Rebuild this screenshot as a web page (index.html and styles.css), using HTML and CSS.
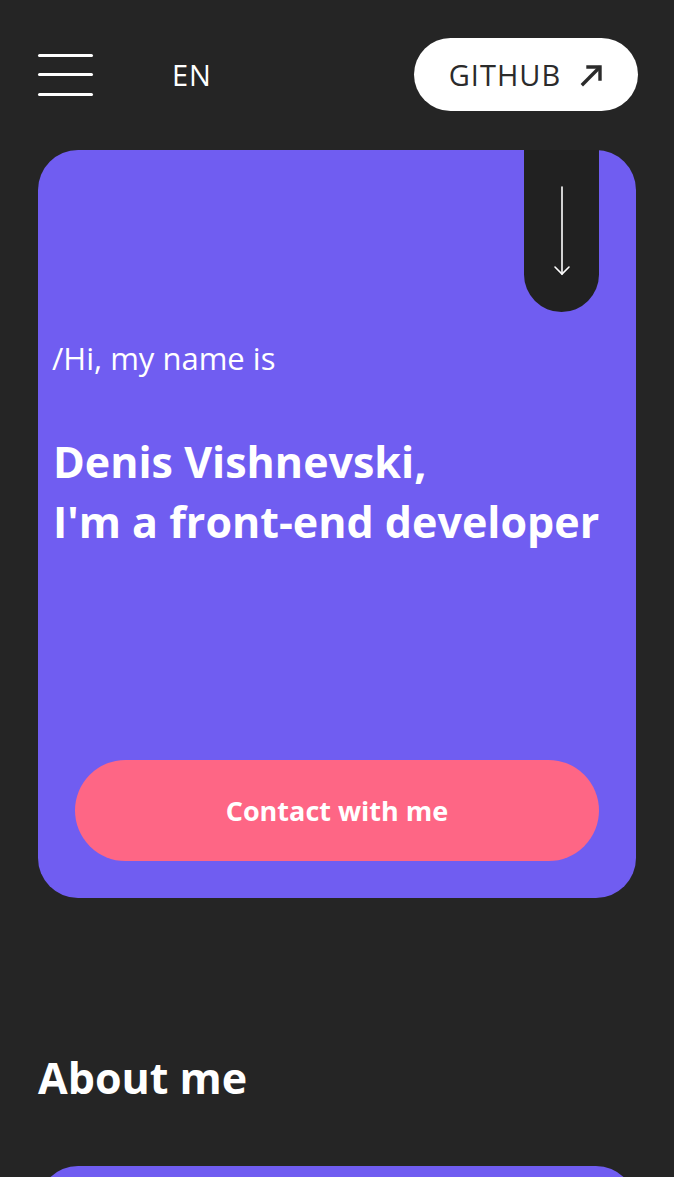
FILE: index.html
```html
<!DOCTYPE html>
<html lang="en">
<head>
<meta charset="utf-8">
<title>Denis Vishnevski</title>
<link rel="stylesheet" href="styles.css">
</head>
<body>
<div class="page">
  <header class="header">
    <button class="burger" aria-label="Menu"><span></span><span></span><span></span></button>
    <span class="lang">EN</span>
    <a class="github" href="#">GITHUB
      <svg class="github-icon" width="24" height="24" viewBox="0 0 24 24" fill="none" stroke="#2b2b2b" stroke-width="3.4" stroke-linecap="square"><path d="M4 21L20 5"/><path d="M9 4H21V16"/></svg>
    </a>
  </header>

  <section class="hero">
    <a class="scroll-tab" href="#about" aria-label="Scroll down">
      <svg width="20" height="92" viewBox="0 0 20 92" fill="none" stroke="#fff" stroke-width="1.6" stroke-linecap="round"><path d="M10 1V88"/><path d="M3 81L10 88L17 81"/></svg>
    </a>
    <p class="hi">/Hi, my name is</p>
    <h1 class="title">Denis Vishnevski,<br>I'm a front-end developer</h1>
    <a class="contact" href="#">Contact with me</a>
  </section>

  <section class="about" id="about">
    <h2 class="about-title">About me</h2>
    <div class="about-card"></div>
  </section>
</div>
</body>
</html>
```

FILE: styles.css
```css
* { box-sizing: border-box; }
html, body {
  margin: 0;
  background: #252525;
  height: 100%;
  overflow: hidden;
}
body {
  font-family: "Open Sans", "Noto Sans", sans-serif;
  color: #fff;
}
.page {
  padding: 38px 38px 0 38px;
}
.header {
  display: flex;
  align-items: center;
  height: 73px;
}
.burger {
  width: 55px;
  height: 42px;
  padding: 0;
  border: 0;
  background: none;
  display: flex;
  flex-direction: column;
  justify-content: space-between;
}
.burger span {
  display: block;
  height: 3px;
  width: 100%;
  background: #fff;
  border-radius: 2px;
}
.lang {
  margin-left: 79px;
  font-size: 29px;
  line-height: 1;
  letter-spacing: 1px;
}
.github {
  margin-left: auto;
  margin-right: -2px;
  width: 224px;
  height: 73px;
  border-radius: 37px;
  background: #fff;
  color: #2b2b2b;
  text-decoration: none;
  font-size: 29px;
  letter-spacing: 1px;
  display: flex;
  align-items: center;
  justify-content: center;
  gap: 18px;
}
.github-icon { flex: none; }

.hero {
  position: relative;
  margin-top: 39px;
  height: 748px;
  background: #705df1;
  border-radius: 40px;
  padding: 189px 14px 37px 14px;
  display: flex;
  flex-direction: column;
}
.scroll-tab {
  position: absolute;
  top: 0;
  right: 37px;
  width: 75px;
  height: 162px;
  background: #212121;
  border-radius: 0 0 38px 38px;
  display: flex;
  justify-content: center;
  padding-top: 36px;
}
.hi {
  margin: 0;
  font-size: 31px;
  line-height: 38px;
}
.title {
  margin: 55px 0 0 1px;
  font-size: 43px;
  line-height: 60px;
  font-weight: 700;
}
.contact {
  margin: auto 23px 0 23px;
  height: 101px;
  border-radius: 51px;
  background: #fe6685;
  color: #fff;
  text-decoration: none;
  font-size: 27px;
  font-weight: 700;
  display: flex;
  align-items: center;
  justify-content: center;
}

.about {
  margin-top: 150px;
}
.about-title {
  margin: 0;
  font-size: 43px;
  line-height: 60px;
  font-weight: 700;
}
.about-card {
  margin-top: 58px;
  height: 120px;
  background: #705df1;
  border-radius: 40px;
}
```
